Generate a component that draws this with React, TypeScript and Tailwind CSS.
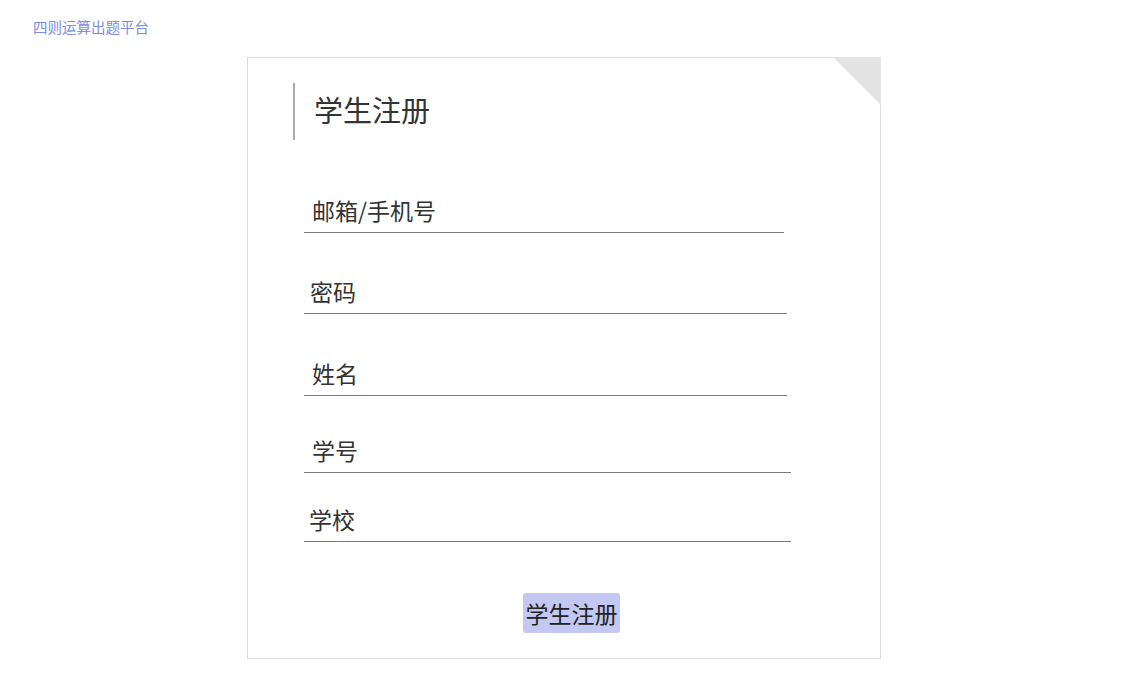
import { useState } from "react";

const fields = [
  { key: "account", label: "邮箱/手机号", width: "w-[480px]", mt: "mt-[52px]", pl: "pl-[8px]" },
  { key: "password", label: "密码", width: "w-[483px]", mt: "mt-[40px]", pl: "pl-[6px]", type: "password" },
  { key: "name", label: "姓名", width: "w-[483px]", mt: "mt-[41px]", pl: "pl-[8px]" },
  { key: "studentNo", label: "学号", width: "w-[487px]", mt: "mt-[36px]", pl: "pl-[8px]" },
  { key: "school", label: "学校", width: "w-[487px]", mt: "mt-[28px]", pl: "pl-[5px]" },
];

export default function App() {
  const [values, setValues] = useState<Record<string, string>>({});

  return (
    <div className="min-h-screen bg-white font-['Noto_Sans_CJK_SC','Noto_Sans',sans-serif]">
      <div className="pt-[13px] pl-[33px] text-[14.5px] leading-[27px] text-[#7b8be6]">四则运算出题平台</div>
      <div className="relative ml-[247px] mt-[17px] w-[634px] h-[602px] border border-[#dcdcdc] bg-white">
        <div className="absolute -top-px -right-px w-[48px] h-[48px] bg-[#e3e3e3] [clip-path:polygon(0_0,100%_0,100%_100%)]" />
        <div className="ml-[45px] mt-[25px] h-[57px] border-l-2 border-[#a9a9a9] pl-[19px] pb-[3px] flex items-center text-[29px] text-[#333]">
          学生注册
        </div>
        <form className="flex flex-col ml-[56px]" onSubmit={(e) => e.preventDefault()}>
          {fields.map((f) => (
            <input
              key={f.key}
              type={f.type ?? "text"}
              placeholder={f.label}
              value={values[f.key] ?? ""}
              onChange={(e) => setValues((prev) => ({ ...prev, [f.key]: e.target.value }))}
              className={`${f.width} ${f.mt} ${f.pl} h-[41px] pb-[5px] border-b border-[#7a7a7a] bg-transparent text-[23px] text-[#333] placeholder:text-[#333] outline-none`}
            />
          ))}
          <button
            type="submit"
            className="mt-[51px] ml-[219px] w-[97px] h-[40px] rounded-[3px] bg-[#c3c8f2] text-[23px] text-[#222]"
          >
            学生注册
          </button>
        </form>
      </div>
    </div>
  );
}
